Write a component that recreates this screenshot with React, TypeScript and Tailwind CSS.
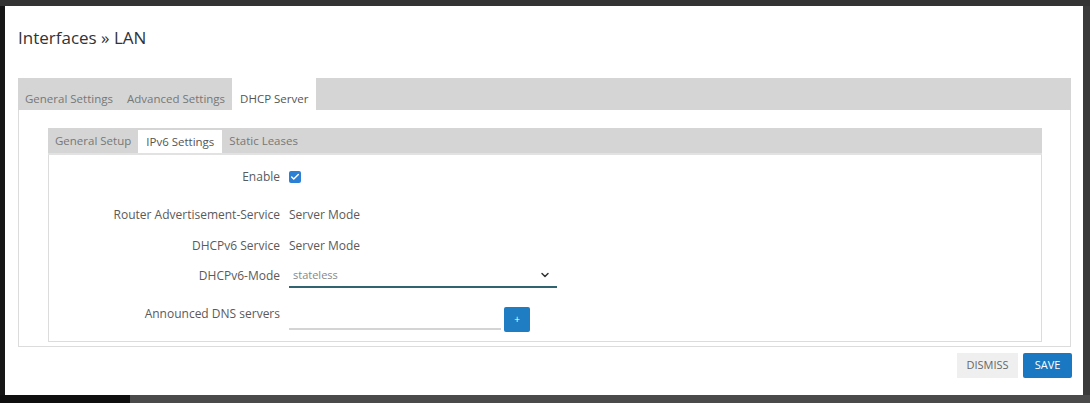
import React from 'react'
import { ChevronDown, Check } from 'lucide-react'

const outerTabs = ['General Settings', 'Advanced Settings', 'DHCP Server']
const innerTabs = ['General Setup', 'IPv6 Settings', 'Static Leases']

function Row({ label, children, className = '', labelClass = '' }: { label: string; children: React.ReactNode; className?: string; labelClass?: string }) {
  return (
    <div className={`flex ${className}`}>
      <div className={`w-[231px] shrink-0 text-right text-[12px] leading-[20px] text-[#5a5a5a] ${labelClass}`}>{label}</div>
      <div className="ml-[9px] flex items-center">{children}</div>
    </div>
  )
}

export default function App() {
  return (
    <div className="w-[1090px] h-[403px] bg-[#3d3d3d] flex flex-col overflow-hidden" style={{ fontFamily: '"Open Sans", "Liberation Sans", sans-serif' }}>
      <div className="h-[6px] shrink-0 bg-[#333]" />
      <div className="flex h-[389px] shrink-0">
        <div className="w-[5px] bg-[#161616]" />
        <div className="w-[1078px] bg-white flex flex-col">
          <div className="pt-[22px] pl-[13px] text-[17px] leading-[20px] text-[#333]">Interfaces » LAN</div>

          <div className="mt-[30px] ml-[13px] mr-[12px]">
            {/* outer tabs */}
            <div className="flex h-[32px]">
              {outerTabs.map(t =>
                t === 'DHCP Server' ? (
                  <div key={t} className="mt-[10px] bg-white px-[8px] text-[11.5px] leading-[22px] text-[#555]">{t}</div>
                ) : (
                  <div key={t} className="bg-[#d5d5d5] px-[7px] pt-[10px] text-[11.5px] leading-[22px] text-[#777]">{t}</div>
                )
              )}
              <div className="flex-1 bg-[#d5d5d5]" />
            </div>

            <div className="border-x border-b border-[#dcdcdc] pt-[18px] pb-[4px] pl-[29px] pr-[28px]">
              {/* inner tabs */}
              <div className="flex h-[27px] bg-[#d5d5d5] border-b-[2px] border-[#e2e2e2]">
                {innerTabs.map(t =>
                  t === 'IPv6 Settings' ? (
                    <div key={t} className="mt-[2px] bg-white px-[8px] text-[11.5px] leading-[23px] text-[#555]">{t}</div>
                  ) : (
                    <div key={t} className="px-[7px] text-[11.5px] leading-[25px] text-[#777]">{t}</div>
                  )
                )}
              </div>

              <div className="border-x border-b border-[#dcdcdc] pt-[12px] pb-[9px]">
                <Row label="Enable" className="h-[20px]">
                  <span className="flex h-[12px] w-[12px] items-center justify-center rounded-[2px] bg-[#2b7fd4]">
                    <Check size={10} strokeWidth={3.5} className="text-white" />
                  </span>
                </Row>
                <Row label="Router Advertisement-Service" className="mt-[18px] h-[20px]">
                  <span className="text-[12px] leading-[20px] text-[#5a5a5a]">Server Mode</span>
                </Row>
                <Row label="DHCPv6 Service" className="mt-[11px] h-[20px]">
                  <span className="text-[12px] leading-[20px] text-[#5a5a5a]">Server Mode</span>
                </Row>
                <Row label="DHCPv6-Mode" className="mt-[8px] h-[24px] items-center">
                  <div className="flex h-[24px] w-[268px] items-center justify-between border-b-2 border-[#2f6470] pl-[4px] pr-[6px]">
                    <span className="text-[11px] text-[#888]">stateless</span>
                    <ChevronDown size={12} strokeWidth={3} className="text-[#333]" />
                  </div>
                </Row>
                <Row label="Announced DNS servers" className="mt-[19px] h-[25px]" labelClass="-mt-[3px]">
                  <div className="flex items-start self-start">
                    <div className="mt-[21px] h-[2px] w-[212px] bg-[#d4d4d4]" />
                    <div className="ml-[3px] flex h-[25px] w-[26px] items-center justify-center rounded-[2px] bg-[#1f7dc3] text-[10px] text-white">+</div>
                  </div>
                </Row>
              </div>
            </div>
          </div>

          <div className="mt-[6px] mr-[11px] flex justify-end gap-[5px]">
            <div className="flex h-[25px] w-[61px] items-center justify-center bg-[#efefef] text-[11px] text-[#666]">DISMISS</div>
            <div className="flex h-[25px] w-[49px] items-center justify-center rounded-[2px] bg-[#1a78c2] text-[11px] text-white">SAVE</div>
          </div>
        </div>
        <div className="w-[7px] bg-[#3a3a3a]" />
      </div>
      <div className="flex h-[8px] shrink-0">
        <div className="w-[130px] bg-[#0f0f0f]" />
        <div className="flex-1 bg-[#4a4a4a]" />
      </div>
    </div>
  )
}
